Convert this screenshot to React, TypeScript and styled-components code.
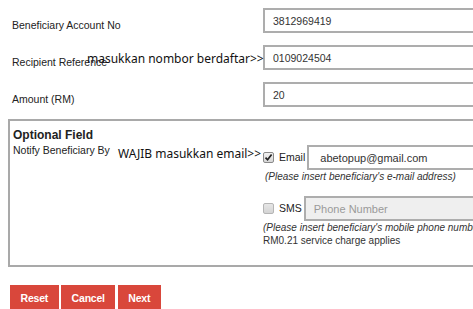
import styled, { createGlobalStyle } from "styled-components";

const GlobalStyle = createGlobalStyle`
  body {
    margin: 0;
    background: #fff;
    overflow: hidden;
    font-family: "Liberation Sans", Arial, sans-serif;
    color: #222;
  }
`;

const fields = [
  { label: "Beneficiary Account No", value: "3812969419" },
  { label: "Recipient Reference", value: "0109024504" },
  { label: "Amount (RM)", value: "20" },
];

export default function App() {
  return (
    <Page>
      <GlobalStyle />
      {fields.map((f) => (
        <FormRow key={f.label}>
          <Label>{f.label}</Label>
          <TextInput readOnly value={f.value} />
        </FormRow>
      ))}

      <Fieldset>
        <Legend>Optional Field</Legend>
        <NotifyGrid>
          <NotifyLabel>Notify Beneficiary By</NotifyLabel>
          <Options>
            <OptionRow>
              <Checkbox checked />
              <OptionLabel>Email</OptionLabel>
              <WideInput readOnly value="abetopup@gmail.com" />
            </OptionRow>
            <Hint $indent={2}>(Please insert beneficiary's e-mail address)</Hint>

            <OptionRow $spaced>
              <Checkbox />
              <OptionLabel>SMS</OptionLabel>
              <WideInput disabled placeholder="Phone Number" />
            </OptionRow>
            <Hint>(Please insert beneficiary's mobile phone number)</Hint>
            <Note>RM0.21 service charge applies</Note>
          </Options>
        </NotifyGrid>
      </Fieldset>

      <Buttons>
        <Button>Reset</Button>
        <Button>Cancel</Button>
        <Button>Next</Button>
      </Buttons>

      <Annotation style={{ left: 87, top: 52 }}>
        masukkan nombor berdaftar&gt;&gt;
      </Annotation>
      <Annotation style={{ left: 118, top: 147 }}>
        WAJIB masukkan email&gt;&gt;
      </Annotation>
    </Page>
  );
}

function Checkbox({ checked = false }: { checked?: boolean }) {
  return (
    <Box $checked={checked}>
      {checked && (
        <svg width="9" height="9" viewBox="0 0 9 9">
          <path
            d="M1.5 4.6 L3.6 6.8 L7.6 1.6"
            fill="none"
            stroke="#222"
            strokeWidth="1.7"
          />
        </svg>
      )}
    </Box>
  );
}

const Page = styled.div`
  position: relative;
  width: 473px;
  height: 309px;
  overflow: hidden;
  padding-top: 2px;
  box-sizing: border-box;
`;

const FormRow = styled.div`
  display: grid;
  grid-template-columns: 263px 250px;
  height: 37px;
  align-items: center;
`;

const Label = styled.div`
  align-self: end;
  padding: 0 0 7px 12px;
  font-size: 10.5px;
  line-height: 13px;
`;

const TextInput = styled.input`
  box-sizing: border-box;
  height: 25px;
  width: 250px;
  border: 2px solid #adadad;
  padding: 0 8px;
  font-family: "Liberation Sans", Arial, sans-serif;
  font-size: 10.5px;
  color: #333;
  outline: none;
  background: #fff;
`;

const Fieldset = styled.section`
  margin: 6px 0 0 8px;
  width: 520px;
  border: 2px solid #a9a9a9;
  padding: 7px 0 18px 3px;
`;

const Legend = styled.div`
  font-weight: bold;
  font-size: 12px;
  line-height: 14px;
  color: #222;
`;

const NotifyGrid = styled.div`
  display: grid;
  grid-template-columns: 250px 1fr;
`;

const NotifyLabel = styled.div`
  margin-top: 2px;
  font-size: 10.5px;
  line-height: 13px;
`;

const Options = styled.div`
  display: flex;
  flex-direction: column;
`;

const OptionRow = styled.div<{ $spaced?: boolean }>`
  display: flex;
  align-items: center;
  margin-top: ${(p) => (p.$spaced ? "13px" : "3px")};
`;

const Box = styled.span<{ $checked: boolean }>`
  box-sizing: border-box;
  width: 11px;
  height: 11px;
  display: flex;
  align-items: center;
  justify-content: center;
  border: 1px solid ${(p) => (p.$checked ? "#8a8a8a" : "#b5b5b5")};
  border-radius: 2px;
  background: ${(p) =>
    p.$checked
      ? "linear-gradient(#f2f2f2, #d6d6d6)"
      : "linear-gradient(#e6e6e6, #d4d4d4)"};
`;

const OptionLabel = styled.span`
  margin: 0 2px 0 5px;
  font-size: 10.5px;
  line-height: 13px;
`;

const WideInput = styled.input`
  box-sizing: border-box;
  height: 25px;
  width: 230px;
  border: 2px solid #adadad;
  padding: 0 9px 0 11px;
  font-family: "Liberation Sans", Arial, sans-serif;
  font-size: 11px;
  color: #333;
  outline: none;
  background: #fff;

  &:disabled {
    background: #efefef;
    padding-left: 8px;
  }
  &::placeholder {
    color: #9a9a9a;
  }
`;

const Hint = styled.div<{ $indent?: number }>`
  margin-left: ${(p) => p.$indent ?? 0}px;
  font-style: italic;
  font-size: 10px;
  line-height: 13px;
  color: #333;
  white-space: nowrap;
`;

const Note = styled.div`
  font-size: 10px;
  line-height: 13px;
  color: #333;
`;

const Buttons = styled.div`
  display: flex;
  gap: 2.5px;
  margin: 18px 0 0 10px;
`;

const Button = styled.button`
  height: 25px;
  padding: 0 10.5px;
  border: none;
  background: #d9473b;
  color: #fff;
  font-family: "Liberation Sans", Arial, sans-serif;
  font-weight: bold;
  font-size: 10.5px;
  letter-spacing: -0.2px;
`;

const Annotation = styled.div`
  position: absolute;
  font-family: "Noto Sans", "Open Sans", sans-serif;
  font-size: 12px;
  line-height: 14px;
  color: #111;
  white-space: nowrap;
`;
